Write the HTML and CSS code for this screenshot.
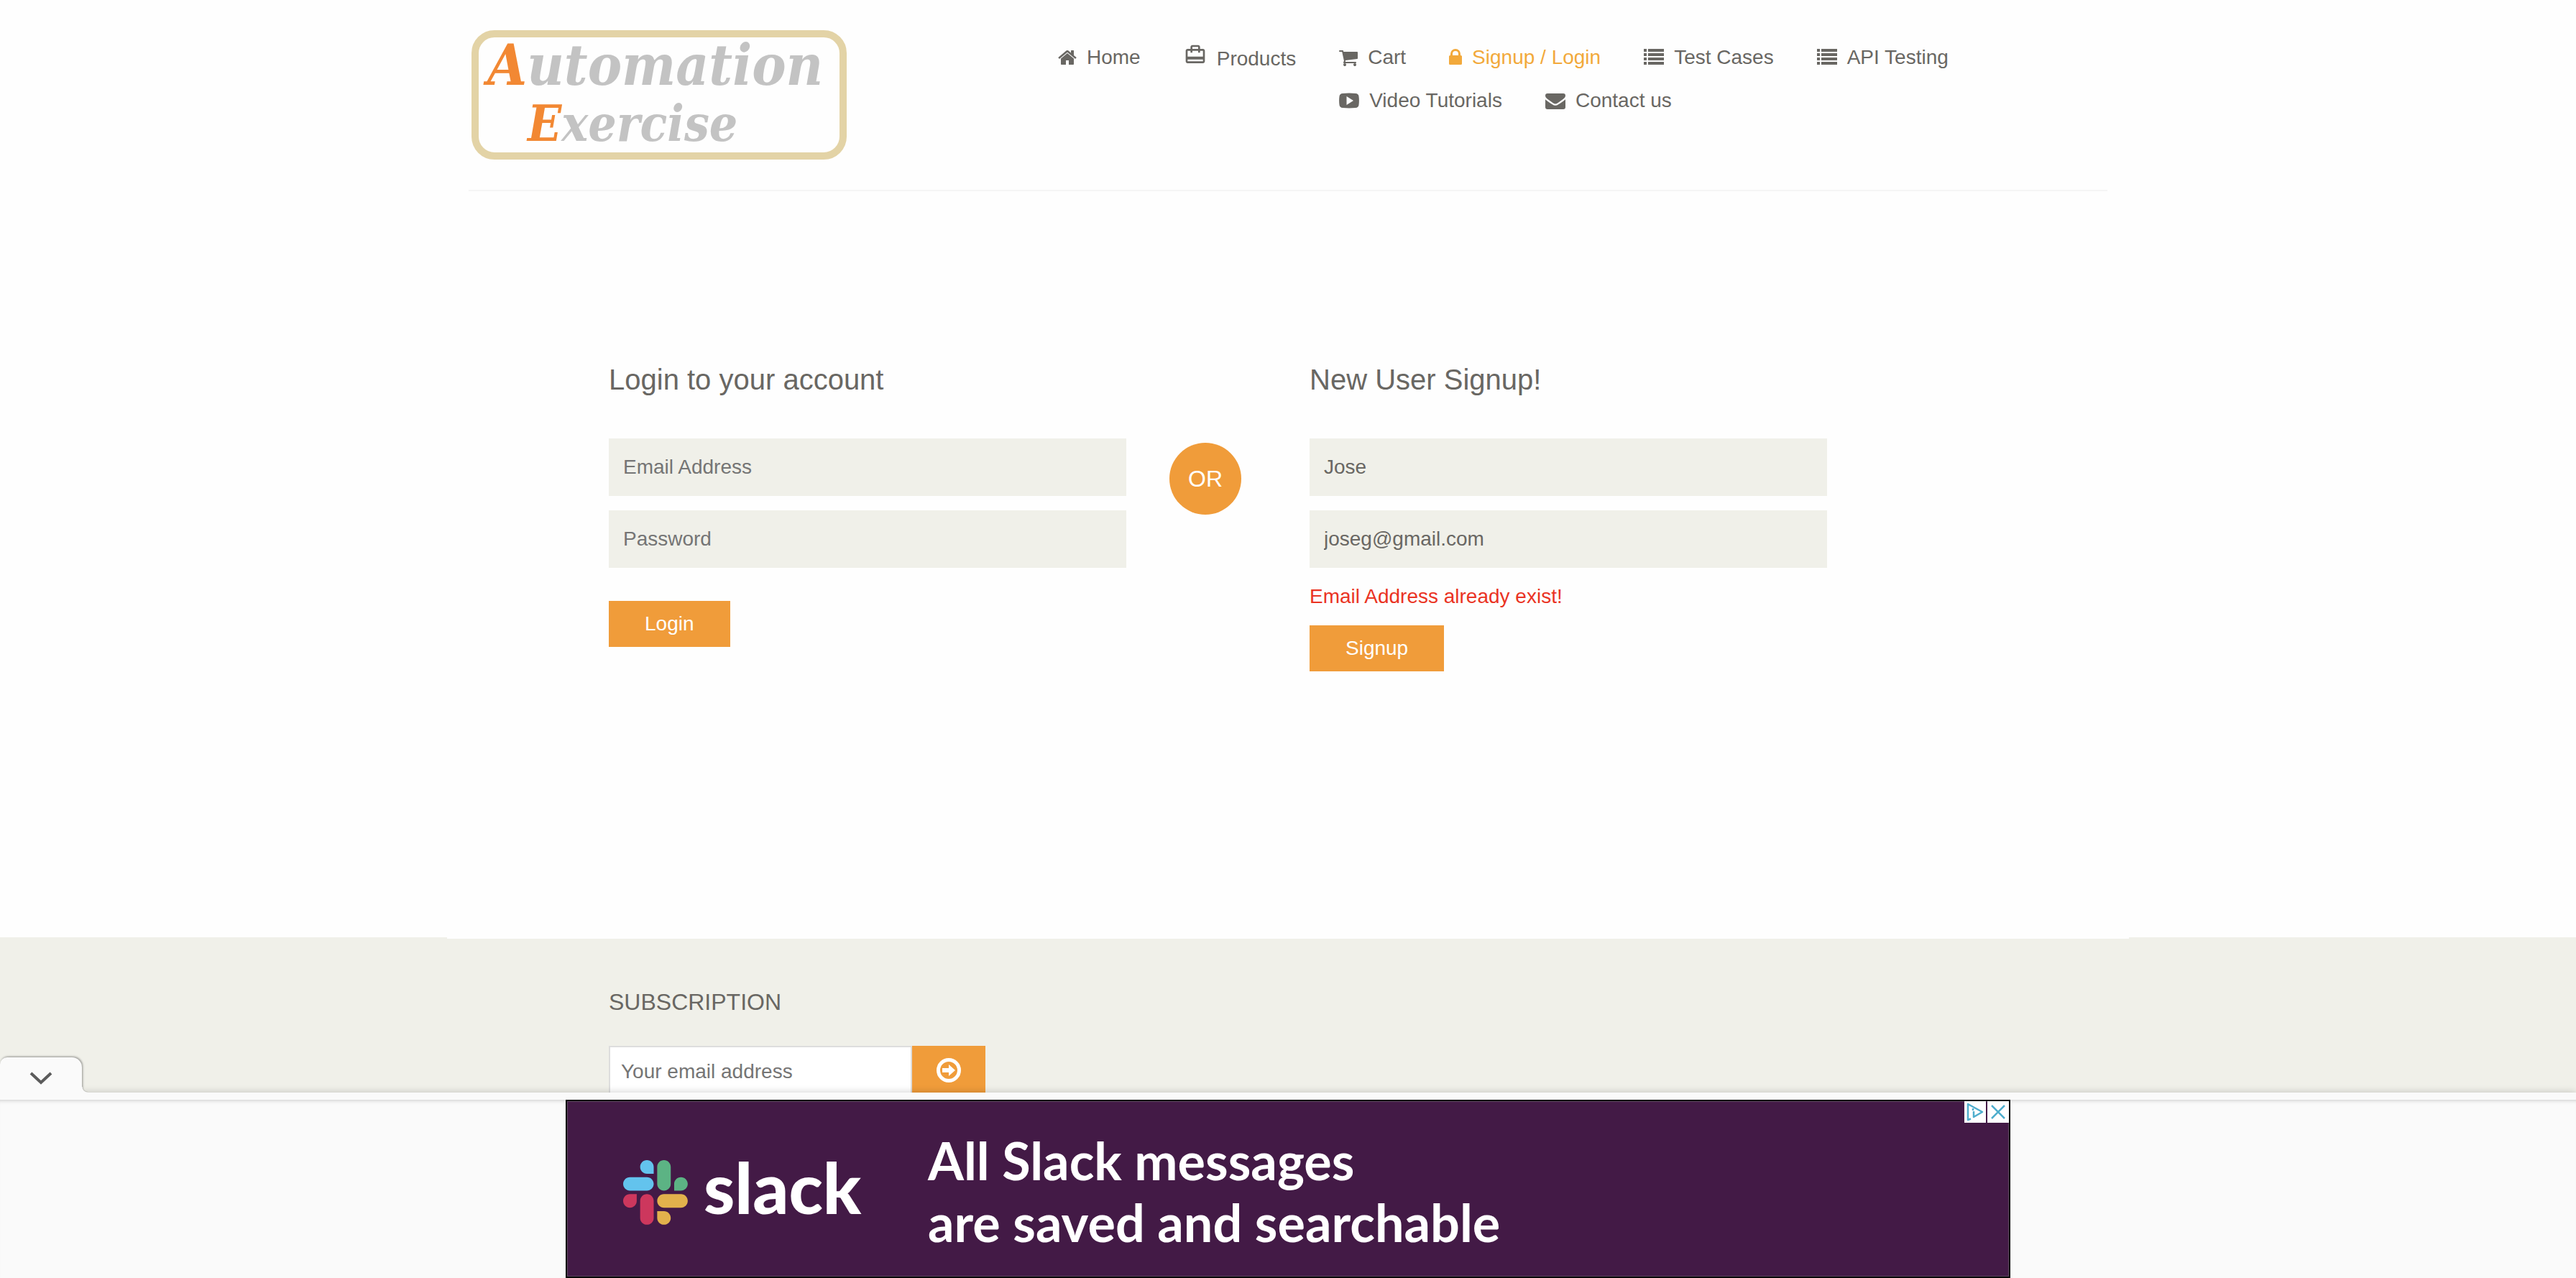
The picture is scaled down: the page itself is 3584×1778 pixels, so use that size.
FILE: index.html
```html
<!DOCTYPE html>
<html lang="en">
<head>
<meta charset="utf-8">
<meta name="viewport" content="width=device-width, initial-scale=1">
<title>Automation Exercise - Signup / Login</title>
<link rel="stylesheet" href="styles.css">
</head>
<body>
<header class="header container">
  <div class="header-inner">
    <a class="logo" href="#" aria-label="Automation Exercise">
      <span class="logo-line"><span class="logo-initial">A</span>utomation</span>
      <span class="logo-line logo-second"><span class="logo-initial">E</span>xercise</span>
    </a>
    <nav class="nav">
      <ul class="nav-list">
        <li><a href="#"><svg width="26" height="28" viewBox="64 0 1664 1792"><path d="M1472 992v480q0 26-19 45t-45 19h-384v-384h-256v384h-384q-26 0-45-19t-19-45v-480q0-1 .5-3t.5-3l575-474 575 474q1 2 1 6zm223-69l-62 74q-8 9-21 11h-3q-13 0-21-7l-692-577-692 577q-12 8-24 7-13-2-21-11l-62-74q-8-10-7-23.5t11-21.5l719-599q32-26 76-26t76 26l244 204v-195q0-14 9-23t23-9h192q14 0 23 9t9 23v408l219 182q10 8 11 21.5t-7 23.5z"/></svg>Home</a></li>
        <li class="nav-products"><a href="#"><svg width="32" height="32" viewBox="0 1.5 24 24"><path d="M20 6h-3V4c0-1.11-.89-2-2-2H9c-1.11 0-2 .89-2 2v2H4c-1.11 0-2 .89-2 2v11c0 1.11.89 2 2 2h16c1.11 0 2-.89 2-2V8c0-1.11-.89-2-2-2zM9 4h6v2H9V4zm11 15H4v-2h16v2zm0-5H4V8h3v2h2V8h6v2h2V8h3v6z"/></svg>Products</a></li>
        <li><a href="#"><svg width="26" height="28" viewBox="64 0 1664 1792"><path d="M704 1536q0 52-38 90t-90 38-90-38-38-90 38-90 90-38 90 38 38 90zm896 0q0 52-38 90t-90 38-90-38-38-90 38-90 90-38 90 38 38 90zm128-1088v512q0 24-16.5 42.5t-40.5 21.5l-1044 122q13 60 13 70 0 16-24 64h920q26 0 45 19t19 45-19 45-45 19h-1024q-26 0-45-19t-19-45q0-11 8-31.5t16-36 21.5-40 15.5-29.5l-177-823h-204q-26 0-45-19t-19-45 19-45 45-19h256q16 0 28.5 6.5t19.5 15.5 13 24.5 8 26 5.5 29.5 4.5 26h1201q26 0 45 19t19 45z"/></svg>Cart</a></li>
        <li><a class="active" href="#"><svg width="18" height="28" viewBox="0 0 18 28"><path d="M2 11V9a7 7 0 0 1 14 0v2h.5a1.500 1.500 0 0 1 1.500 1.500v10a1.500 1.500 0 0 1-1.500 1.500h-15A1.500 1.500 0 0 1 0 22.500v-10A1.500 1.500 0 0 1 1.500 11zM5 11h8V9a4 4 0 0 0-8 0z"/></svg>Signup / Login</a></li>
        <li><a href="#"><svg width="28" height="28" viewBox="0 0 28 28"><path d="M0 2h4v4H0zM6 2h22v4H6zM0 8h4v4H0zM6 8h22v4H6zM0 14h4v4H0zM6 14h22v4H6zM0 20h4v4H0zM6 20h22v4H6z"/></svg>Test Cases</a></li>
        <li><a href="#"><svg width="28" height="28" viewBox="0 0 28 28"><path d="M0 2h4v4H0zM6 2h22v4H6zM0 8h4v4H0zM6 8h22v4H6zM0 14h4v4H0zM6 14h22v4H6zM0 20h4v4H0zM6 20h22v4H6z"/></svg>API Testing</a></li>
        <li><a href="#"><svg width="28" height="28" viewBox="0 0 28 28"><path fill-rule="evenodd" d="M5 4q9-.8 18 0 4 .3 4.500 4 .8 6 0 12-.5 3.700-4.500 4-9 .8-18 0-4-.3-4.500-4-.8-6 0-12Q1 4.300 5 4zM10.500 8v12L20 14z"/></svg>Video Tutorials</a></li>
        <li><a href="#"><svg width="28" height="28" viewBox="0 0 28 28"><path d="M3 4h22a3 3 0 0 1 3 3c0 2-1.500 3.700-3 4.800l-8 5.600c-2 1.400-4 1.400-6 0l-8-5.600C1.500 10.700 0 9 0 7a3 3 0 0 1 3-3zM0 12.200c3 2.600 6.500 4.800 9.800 7.100 2.800 2 5.600 2 8.400 0 3.300-2.300 6.800-4.500 9.800-7.100V23a3 3 0 0 1-3 3H3a3 3 0 0 1-3-3z"/></svg>Contact us</a></li>
      </ul>
    </nav>
  </div>
</header>

<main class="container forms">
  <section class="form-column">
    <h2>Login to your account</h2>
    <form class="form">
      <input class="field" type="email" placeholder="Email Address" aria-label="Email Address">
      <input class="field" type="password" placeholder="Password" aria-label="Password">
      <button class="button button-login" type="button">Login</button>
    </form>
  </section>
  <div class="divider"><span class="or">OR</span></div>
  <section class="form-column">
    <h2>New User Signup!</h2>
    <form class="form">
      <input class="field" type="text" value="Jose" aria-label="Name">
      <input class="field" type="email" value="joseg@gmail.com" aria-label="Email Address">
      <p class="error">Email Address already exist!</p>
      <button class="button" type="button">Signup</button>
    </form>
  </section>
</main>

<footer class="footer">
  <div class="container footer-inner">
    <h2 class="footer-title">SUBSCRIPTION</h2>
    <form class="subscribe">
      <input type="email" placeholder="Your email address" aria-label="Your email address">
      <button type="button" aria-label="Subscribe"><svg width="36" height="36" viewBox="0 0 36 36"><circle cx="18" cy="18" r="14.500" fill="none" stroke="#fff" stroke-width="5"/><path fill="#fff" d="M9 15h9v-5l9 8-9 8v-5H9z"/></svg></button>
    </form>
  </div>
</footer>

<aside class="ad-bar">
  <button class="ad-toggle" type="button" aria-label="Hide advertisement"><svg width="32" height="20" viewBox="0 0 32 20"><path d="M2 3l14 13L30 3" fill="none" stroke="#5b5b5b" stroke-width="4"/></svg></button>
  <div class="ad-shelf">
    <div class="ad">
      <svg class="ad-mark" width="90" height="92" viewBox="0 0 123 123">
        <path fill="#cd375d" d="M25.800 77.600c0 7.100-5.800 12.900-12.900 12.900S0 84.700 0 77.600s5.800-12.900 12.900-12.900h12.900zM32.300 77.600c0-7.100 5.800-12.900 12.900-12.900s12.900 5.800 12.900 12.900v32.300c0 7.100-5.800 12.900-12.900 12.900s-12.900-5.800-12.900-12.900z"/>
        <path fill="#63c3ed" d="M45.200 25.800c-7.100 0-12.900-5.800-12.900-12.900S38.100 0 45.200 0s12.900 5.800 12.900 12.900v12.900zM45.200 32.300c7.100 0 12.900 5.800 12.900 12.900s-5.800 12.900-12.900 12.900H12.900C5.800 58.100 0 52.300 0 45.200s5.800-12.900 12.900-12.900z"/>
        <path fill="#5cb384" d="M97 45.200c0-7.100 5.800-12.900 12.900-12.900s12.900 5.800 12.900 12.900-5.800 12.900-12.900 12.900H97zM90.500 45.200c0 7.100-5.800 12.900-12.900 12.900s-12.900-5.800-12.900-12.900V12.900C64.700 5.800 70.500 0 77.600 0s12.900 5.800 12.900 12.900z"/>
        <path fill="#e2b14c" d="M77.600 97c7.100 0 12.900 5.800 12.900 12.900s-5.800 12.900-12.900 12.900-12.900-5.800-12.900-12.900V97zM77.600 90.500c-7.100 0-12.900-5.800-12.900-12.900s5.800-12.900 12.900-12.900h32.300c7.100 0 12.900 5.800 12.900 12.900s-5.800 12.900-12.900 12.900z"/>
      </svg>
      <span class="ad-brand">slack</span>
      <p class="ad-copy">All Slack messages<br>are saved and searchable</p>
      <div class="ad-controls">
        <button type="button" aria-label="About this ad"><svg width="30" height="30" viewBox="0 0 30 30" fill="none" stroke="#4faecd" stroke-width="2.500" stroke-linejoin="round"><path fill="none" d="M9 24.500L5 26V4l20 11-12 7v-8M12 10v3"/></svg></button>
        <button type="button" aria-label="Close ad"><svg width="30" height="30" viewBox="0 0 30 30"><path d="M6 6l18 18M24 6L6 24" stroke="#4faecd" stroke-width="2.500"/></svg></button>
      </div>
    </div>
  </div>
</aside>
</body>
</html>
```
FILE: styles.css
```css
* { box-sizing: border-box; }

body {
  margin: 0;
  min-height: 100vh;
  display: flex;
  flex-direction: column;
  background: #fefefe;
  color: #696763;
  font: 28px/40px "Liberation Sans", Arial, sans-serif;
}

h2, p, ul { margin: 0; padding: 0; }
ul { list-style: none; }
a { color: inherit; text-decoration: none; }
button, input { font: inherit; color: inherit; border: 0; border-radius: 0; margin: 0; }
button { padding: 0; cursor: pointer; }
svg { display: block; flex: none; fill: currentColor; }

.container {
  width: 100%;
  max-width: 2340px;
  margin: 0 auto;
  padding: 0 30px;
}

/* Header */
.header-inner {
  display: flex;
  align-items: flex-start;
  border-bottom: 2px solid #f5f5f5;
  padding: 42px 0 42px 4px;
}

.logo {
  width: 522px;
  height: 180px;
  border: 10px solid #e3d3a6;
  border-radius: 32px;
  color: #c3c3c3;
  font-family: "DejaVu Serif Condensed", "DejaVu Serif", serif;
  font-style: italic;
  font-weight: bold;
  padding: 0 12px;
}
.logo-line { display: block; font-size: 79px; line-height: 78px; white-space: nowrap; }
.logo-second { padding-left: 56px; font-size: 69px; line-height: 84px; }
.logo-initial { color: #f28833; }

.nav { flex: 1; padding: 18px 0 0 264px; }
.nav-list { display: flow-root; height: 120px; }
.nav-list li { float: left; padding: 0 30px 20px; }
.nav-list li.nav-products { padding-top: 2px; }
.nav-list a { display: flex; align-items: center; gap: 14px; white-space: nowrap; }
.nav-products svg { align-self: flex-start; }
.nav-list .active { color: #f2a93b; }

/* Login and signup forms */
.forms { display: flex; padding: 238px 30px 370px 225px; }
.form-column { flex: 0 1 720px; }
.form-column h2 { font-size: 40px; line-height: 48px; font-weight: 400; margin-bottom: 58px; }
.form { display: flex; flex-direction: column; align-items: flex-start; gap: 20px; }
.field { width: 100%; height: 80px; padding: 0 20px; background: #f0f0e9; }
input::placeholder { color: #757575; opacity: 1; }
.button { height: 64px; padding: 0 50px; background: #f09c3a; color: #fff; }
.button-login { margin-top: 26px; }
.error { color: #ea3323; }
.divider { padding: 112px 95px 0 60px; }
.or {
  display: flex;
  align-items: center;
  justify-content: center;
  width: 100px;
  height: 100px;
  border-radius: 50%;
  background: #f09c3a;
  color: #fff;
  font-size: 32px;
}

/* Footer */
.footer { flex: 1; background: #f0f0e9; }
.footer-inner { border-top: 2px solid #fefefe; padding: 68px 30px 0 225px; }
.footer-title { font-size: 32px; line-height: 40px; font-weight: 400; margin-bottom: 41px; }
.subscribe { display: flex; align-items: flex-start; }
.subscribe input { width: 422px; height: 72px; padding: 0 15px; border: 2px solid #ddd; background: #fff; }
.subscribe button {
  display: flex;
  align-items: center;
  justify-content: center;
  width: 102px;
  height: 68px;
  background: #f09c3a;
}

/* Anchored advertisement */
.ad-bar {
  position: fixed;
  left: 0;
  right: 0;
  bottom: 0;
  background: #fafafa;
  box-shadow: 0 0 10px rgba(0, 0, 0, .2);
  padding-top: 10px;
}
.ad-toggle {
  position: absolute;
  left: 0;
  bottom: 100%;
  width: 114px;
  height: 49px;
  display: flex;
  align-items: center;
  justify-content: center;
  padding-top: 8px;
  border-radius: 10px 14px 0 0;
  background: #fafafa;
  box-shadow: 1px -1px 3px rgba(0, 0, 0, .4);
  clip-path: inset(-6px -8px 0 0);
}
.ad-toggle::after {
  content: "";
  position: absolute;
  left: 100%;
  bottom: 0;
  width: 8px;
  height: 8px;
  background: radial-gradient(circle at 100% 0, #f0f0e900 6px, #c4c4bf 7px, #fafafa 8px);
}
.ad-shelf { box-shadow: inset 0 6px 6px -6px rgba(0, 0, 0, .25); }
.ad {
  position: relative;
  display: flex;
  align-items: center;
  width: 100%;
  max-width: 2010px;
  height: 248px;
  margin: 0 auto;
  padding: 10px 76px 0 78px;
  border: 2px solid #000;
  background: #431a46;
  color: #fff;
  font-family: Lato, sans-serif;
  font-weight: 700;
  outline: 1px solid #5f4561;
  outline-offset: -3px;
}
.ad-brand { width: 334px; padding: 0 0 16px 22px; font-size: 98px; line-height: 100px; font-weight: 900; }
.ad-copy { padding-bottom: 4px; font-size: 72px; line-height: 86px; white-space: nowrap; }
.ad-controls { position: absolute; top: 0; right: 0; display: flex; gap: 2px; }
.ad-controls button { width: 30px; height: 30px; background: #fff; }
```
